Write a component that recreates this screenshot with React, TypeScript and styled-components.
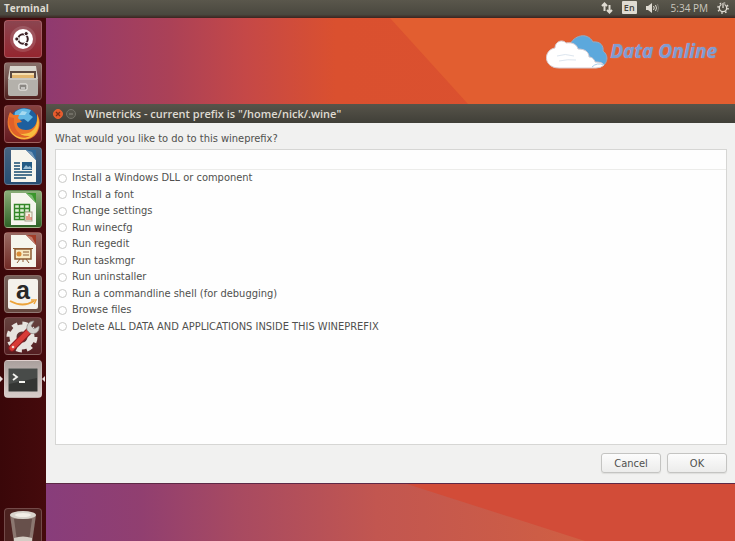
import React, { useState } from "react";
import styled, { createGlobalStyle } from "styled-components";

const GlobalStyle = createGlobalStyle`
  * { box-sizing: border-box; }
  body { margin: 0; font-family: "DejaVu Sans Condensed", "DejaVu Sans", sans-serif; font-size: 11px; color: #50504e; }
  button, input { font: inherit; color: inherit; }
`;

const Desktop = styled.div`
  display: flex;
  flex-direction: column;
  height: 100vh;
  overflow: hidden;
`;

const TopBar = styled.header`
  display: flex;
  align-items: center;
  justify-content: space-between;
  flex: none;
  height: 18px;
  padding: 0 6px 3px 4px;
  background: linear-gradient(#5a574c, #4a483f 80%, #3b2420);
  color: #dfdbd2;
  font-family: "Open Sans", sans-serif;
`;

const AppName = styled.span`
  font-size: 10px;
  font-weight: 700;
`;

const Indicators = styled.div`
  display: flex;
  align-items: center;
  gap: 9px;
`;

const Language = styled.span`
  padding: 0 2px;
  border-radius: 1px;
  background: #dfdbd2;
  color: #45433c;
  font-size: 9px;
  line-height: 13px;
  font-weight: 600;
`;

const Clock = styled.time`
  margin-left: 3px;
  color: #cbc7be;
  font-size: 10px;
`;

const Main = styled.div`
  display: flex;
  flex: 1;
  min-height: 0;
`;

const Launcher = styled.nav`
  display: flex;
  flex-direction: column;
  justify-content: space-between;
  flex: none;
  width: 46px;
  padding: 2px 0 0 4px;
  background: linear-gradient(90deg, #3a0709, #450a0c);
  overflow: hidden;
`;

const AppList = styled.div`
  display: grid;
  grid-auto-rows: 42px 43px;
`;

const Tile = styled.button<{ $bg: string; $active?: boolean }>`
  position: relative;
  flex: none;
  width: 38px;
  height: 38px;
  padding: 0;
  border: 1px solid rgba(255, 220, 220, 0.22);
  border-radius: 4px;
  background: ${(p) => p.$bg};
  svg { display: block; width: 36px; height: 36px; }
  &::before, &::after {
    content: "";
    display: ${(p) => (p.$active ? "block" : "none")};
    position: absolute;
    top: 15px;
    border: 3px solid transparent;
  }
  &::before { left: -5px; border-left-color: #e9dede; border-right-width: 0; }
  &::after { right: -4px; border-right-color: #e9dede; border-left-width: 0; }
`;

const TrashTile = styled(Tile)`
  margin-bottom: -5px;
`;

const Workspace = styled.main`
  display: flex;
  flex: 1;
  flex-direction: column;
  min-width: 0;
`;

const Banner = styled.div`
  display: flex;
  justify-content: flex-end;
  align-items: flex-start;
  flex: none;
  height: 86px;
  padding: 15px 18px 0 0;
  background: linear-gradient(90deg, #8f3a70, #ab4157 18%, #c54847 29%, #da502f 42%, #dc522f);
  position: relative;
`;

const Beam = styled.svg`
  position: absolute;
  inset: 0;
  width: 100%;
  height: 100%;
`;

const Brand = styled.div`
  display: flex;
  align-items: center;
  gap: 2px;
  position: relative;
  color: #7f9bd2;
  font: italic 700 19px "Open Sans", sans-serif;
  line-height: 37px;
  text-shadow: 0 0 1px #c9b8c4;
`;

const Dialog = styled.section`
  display: flex;
  flex-direction: column;
  flex: 1;
  min-height: 0;
  background: #f1f1f0;
`;

const TitleBar = styled.header`
  display: flex;
  align-items: center;
  gap: 3px;
  flex: none;
  height: 19px;
  padding-left: 7px;
  background: linear-gradient(#57544a, #403f38);
  color: #dfdbd2;
`;

const WindowButton = styled.button<{ $close?: boolean }>`
  width: 10px;
  height: 10px;
  padding: 0;
  border: 1px solid ${(p) => (p.$close ? "#e96032" : "#75736a")};
  border-radius: 50%;
  background: ${(p) => (p.$close ? "#e65a2c" : "#55534a")};
  svg { display: block; width: 8px; height: 8px; }
`;

const Title = styled.h1`
  margin: 0 0 0 6px;
  font-family: "Open Sans", sans-serif;
  font-size: 11px;
  font-weight: 600;
`;

const Content = styled.form`
  display: flex;
  flex: 1;
  flex-direction: column;
  min-height: 0;
  padding: 8px 8px 10px 9px;
`;

const Prompt = styled.p`
  margin: 0 0 3px;
  line-height: 15px;
`;

const List = styled.fieldset`
  flex: 1;
  min-width: 0;
  min-height: 0;
  margin: 0;
  padding: 0;
  border: 1px solid #d6d6d4;
  background: #fefefe;
`;

const ListHeader = styled.div`
  height: 20px;
  border-bottom: 1px solid #ececea;
`;

const Options = styled.div`
  display: grid;
  grid-template-rows: repeat(5, 16px 17px);
`;

const Option = styled.label`
  display: flex;
  align-items: center;
  gap: 5px;
  padding-left: 2px;
  line-height: 16px;
  white-space: nowrap;
`;

const Radio = styled.input`
  appearance: none;
  width: 9px;
  height: 9px;
  margin: 0;
  border: 1px solid #c9c9c7;
  border-radius: 50%;
  background: #fff;
  &:checked { background: radial-gradient(#555 35%, #fff 40%); }
`;

const Actions = styled.footer`
  display: flex;
  justify-content: flex-end;
  gap: 6px;
  padding-top: 8px;
`;

const Action = styled.button`
  width: 60px;
  height: 20px;
  padding: 0;
  border: 1px solid #c4c4c2;
  border-radius: 3px;
  background: linear-gradient(#fcfcfc, #ececeb);
  box-shadow: 0 1px 1px #dededc;
`;

const LowerDesktop = styled.div`
  position: relative;
  flex: none;
  height: 58px;
  border-top: 1px solid #5d2946;
  background: linear-gradient(90deg, #883d7b, #913f70 14%, #a84a61 28%, #c25650 48%, #d05f43 78%);
`;

const UbuntuIcon = () => (
  <svg viewBox="0 0 36 36">
    <circle cx="18" cy="18" r="13" fill="#ffffff22" />
    <circle cx="18" cy="18" r="10" fill="#fff" />
    <circle cx="18" cy="18" r="4.8" fill="none" stroke="#3d2226" strokeWidth="2" />
    <g fill="#3d2226" stroke="#fff" strokeWidth="1">
      <circle cx="11.8" cy="18" r="2.1" />
      <circle cx="21.2" cy="12.6" r="2.1" />
      <circle cx="21.2" cy="23.4" r="2.1" />
    </g>
  </svg>
);

const FilesIcon = () => (
  <svg viewBox="0 0 36 36">
    <path d="M5 3h26l2 13H3z" fill="#d9d5cd" />
    <path d="M5 8h26v8H5z" fill="#5b4941" />
    <path d="M7 10h22v6H7z" fill="#e2b56f" />
    <path d="M7 10h22v2H7z" fill="#f5deb0" />
    <rect x="3" y="15" width="30" height="18" rx="2" fill="#b4b1ab" />
    <path d="M4 16h28" stroke="#dedbd5" />
    <rect x="14" y="21" width="8" height="6" rx="1" fill="#8a8782" stroke="#f4f2ee" />
    <path d="M16 25h4" stroke="#fff" />
  </svg>
);

const FirefoxIcon = () => (
  <svg viewBox="0 0 36 36">
    <circle cx="19" cy="16" r="14" fill="#1d5f9f" />
    <path d="M10 6q7-6 16-2l-2 4 4 3-5 5-4-3-6 1-4-2z" fill="#64b8e4" />
    <path d="M17 5l5 1-2 3-6 0z" fill="#a6daf0" />
    <path d="M5 6c-4 9-3 18 3 23 7 7 19 6 24-2 4-7 3-15 0-19 1 10-3 16-11 16-6 0-9-3-9-7l5-1-4-4 1-3-5 0c-2-1-3-2-4-3z" fill="#ed762a" />
    <path d="M32 8c2 10-3 20-14 20C9 28 5 23 4 16c0 10 5 17 15 17 12 0 18-13 13-25z" fill="#f7bd3e" />
    <path d="M4 11c-1 8 1 14 6 18 5 3 10 4 15 1C14 31 8 23 9 12z" fill="#e0602a" />
  </svg>
);

const DocumentIcon = ({ color, children }: { color: string; children: React.ReactNode }) => (
  <svg viewBox="0 0 36 36">
    <path d="M6 2h15l10 10v22H6z" fill="#f6f5ed" />
    <path d="M21 2h10v10z" fill={color} />
    <path d="M21 2l10 10-4-8z" fill="#ffffff55" />
    {children}
  </svg>
);

const WriterIcon = () => (
  <DocumentIcon color="#2f6697">
    <path d="M9 15h6M9 18h6M9 21h6M9 24h18M9 27h18M9 30h12" stroke="#164b70" strokeWidth="1.6" />
    <rect x="17" y="14" width="10" height="8" fill="#245c85" />
    <path d="M18 21l3-4 2 2 2-1 2 3z" fill="#9bbfd5" />
  </DocumentIcon>
);

const CalcIcon = () => (
  <DocumentIcon color="#3a962b">
    <path d="M9.500 13.500h15v15h-15zM9.500 17.500h15M9.500 21.500h15M9.500 25.500h15M14.500 13v15M19.500 13v15" fill="#dff0d5" stroke="#348728" strokeWidth="1.4" />
    <rect x="20" y="21" width="7" height="9" fill="#f5f1df" stroke="#a5a18b" />
    <path d="M22 29v-4M24 29v-6M26 29v-3" stroke="#d14b34" />
  </DocumentIcon>
);

const ImpressIcon = () => (
  <DocumentIcon color="#a23c27">
    <rect x="10" y="16" width="16" height="10" fill="#f7e9c3" stroke="#8d5b33" strokeWidth="1.5" />
    <path d="M8 15.500h20M18 26v3M12 30l3-4M24 30l-3-4M18 19h6M18 22h6" stroke="#8d5b33" />
    <circle cx="14" cy="21" r="2.500" fill="#d98c37" />
  </DocumentIcon>
);

const AmazonIcon = () => (
  <svg viewBox="0 0 36 36">
    <rect x="3" y="3" width="30" height="30" rx="2" fill="#f5f2ec" />
    <text x="18" y="23" textAnchor="middle" fontFamily="Liberation Sans, sans-serif" fontWeight="700" fontSize="25" fill="#292827">a</text>
    <path d="M5 25q13 7 24 0" fill="none" stroke="#eda43b" strokeWidth="1.800" />
    <path d="M26 24h5l-2 4" fill="none" stroke="#eda43b" strokeWidth="1.500" />
  </svg>
);

const SettingsIcon = () => (
  <svg viewBox="0 0 36 36">
    <circle cx="17" cy="19" r="9" fill="none" stroke="#e7e4df" strokeWidth="7" />
    <circle cx="17" cy="19" r="13.500" fill="none" stroke="#e7e4df" strokeWidth="4" strokeDasharray="5.600 5" />
    <path d="M7 30L25 12" stroke="#8d1b20" strokeWidth="7" strokeLinecap="round" />
    <path d="M7 30L24 13" stroke="#d83b36" strokeWidth="5" strokeLinecap="round" />
    <path d="M22 12c-1-6 3-9 7-9l-3 5 3 3 5-3c1 6-4 9-9 7z" fill="#d4d2ce" stroke="#8d8885" strokeWidth=".7" />
    <circle cx="8" cy="29" r="1.300" fill="#efd5ca" />
  </svg>
);

const TerminalIcon = () => (
  <svg viewBox="0 0 36 36">
    <rect x="3.500" y="7.500" width="29" height="23" rx="1" fill="#343634" stroke="#81807d" />
    <path d="M4 8h28v9L4 23z" fill="#484b49" />
    <path d="M8 13l4 3-4 3M14 21h6" fill="none" stroke="#f3f3ef" strokeWidth="1.800" />
  </svg>
);

const TrashIcon = () => (
  <svg viewBox="0 0 36 36">
    <path d="M5 6h26l-4 28H9z" fill="#8b7770" />
    <path d="M9 10h18l-3 22H12z" fill="#67504b" />
    <ellipse cx="18" cy="6" rx="13" ry="4" fill="#d9d4cd" />
    <ellipse cx="18" cy="6" rx="8" ry="2" fill="#f2eee7" />
    <path d="M9 29q9-3 18 0v7H9z" fill="#d4cdc5" />
  </svg>
);

const CloudLogo = () => (
  <svg width="62" height="37" viewBox="0 0 62 37">
    <path d="M24 12C27 3 41-2 47 9c7-1 11 4 10 9 7 5 4 15-4 16H28C16 35 12 22 24 12z" fill="#5ca8dc" stroke="#9aa9bd" />
    <path d="M13 35C-3 35-3 17 9 15c0-7 8-9 11-5 7-1 11 2 12 6 7 0 11 3 11 8 4 0 6 4 6 5 5 0 8 1 9 3q-3 3-8 3z" fill="#fff" stroke="#d7cbd0" />
    <path d="M11 23q8-3 17 0M13 28q9-2 17-1" fill="none" stroke="#dde6ef" />
    <path d="M46 34q5-5 12-2" fill="none" stroke="#a8cdea" />
  </svg>
);

const NetworkIcon = () => (
  <svg width="12" height="12" viewBox="0 0 12 12" fill="none" stroke="#dfdbd2" strokeWidth="2">
    <path d="M3.500 9V2M1 4l2.500-2.500L6 4M8.500 3v7M6 8l2.500 2.500L11 8" />
  </svg>
);

const SoundIcon = () => (
  <svg width="13" height="12" viewBox="0 0 13 12" fill="none" stroke="#dfdbd2">
    <path d="M0 4h2l4-3v10L2 8H0z" fill="#dfdbd2" stroke="none" />
    <path d="M7.500 4q1.500 2 0 4M9.500 3q2 3 0 6" />
    <path d="M11.500 2q2 4 0 8" stroke="#858177" />
  </svg>
);

const PowerIcon = () => (
  <svg width="12" height="12" viewBox="0 0 12 12" fill="none" stroke="#dfdbd2">
    <circle cx="6" cy="6" r="3.700" strokeWidth="1.300" />
    <circle cx="6" cy="6" r="5" strokeWidth="1.600" strokeDasharray="1.600 2.327" />
    <path d="M6 1v5" stroke="#4e4b42" strokeWidth="3" />
    <path d="M6 1v5" strokeWidth="1.300" />
  </svg>
);

const apps = [
  { name: "Search", bg: "linear-gradient(#8b4550, #95262f)", Icon: UbuntuIcon },
  { name: "Files", bg: "linear-gradient(#88706a, #51211f)", Icon: FilesIcon },
  { name: "Firefox", bg: "linear-gradient(#87433f, #641820)", Icon: FirefoxIcon },
  { name: "Writer", bg: "linear-gradient(#466380, #264e73)", Icon: WriterIcon },
  { name: "Calc", bg: "linear-gradient(#8bae78, #2f6427)", Icon: CalcIcon },
  { name: "Impress", bg: "linear-gradient(#9a6a63, #712a25)", Icon: ImpressIcon },
  { name: "Amazon", bg: "linear-gradient(#74605a, #66483f)", Icon: AmazonIcon },
  { name: "System settings", bg: "linear-gradient(#66433f, #541d20)", Icon: SettingsIcon },
  { name: "Terminal", bg: "linear-gradient(#aaa09d, #d7cdca)", Icon: TerminalIcon },
];

const options = [
  "Install a Windows DLL or component",
  "Install a font",
  "Change settings",
  "Run winecfg",
  "Run regedit",
  "Run taskmgr",
  "Run uninstaller",
  "Run a commandline shell (for debugging)",
  "Browse files",
  "Delete ALL DATA AND APPLICATIONS INSIDE THIS WINEPREFIX",
];

export default function App() {
  const [choice, setChoice] = useState("");
  return (
    <Desktop>
      <GlobalStyle />
      <TopBar>
        <AppName>Terminal</AppName>
        <Indicators>
          <NetworkIcon />
          <Language>En</Language>
          <SoundIcon />
          <Clock>5:34 PM</Clock>
          <PowerIcon />
        </Indicators>
      </TopBar>
      <Main>
        <Launcher aria-label="Launcher">
          <AppList>
            {apps.map(({ name, bg, Icon }) => (
              <Tile key={name} aria-label={name} $bg={bg} $active={name === "Terminal"}>
                <Icon />
              </Tile>
            ))}
          </AppList>
          <TrashTile aria-label="Trash" $bg="#4c2220">
            <TrashIcon />
          </TrashTile>
        </Launcher>
        <Workspace>
          <Banner>
            <Beam viewBox="0 0 689 86" preserveAspectRatio="none" aria-hidden="true">
              <path d="M344 0H689V86H422z" fill="#e25e30" />
            </Beam>
            <Brand>
              <CloudLogo />
              Data Online
            </Brand>
          </Banner>
          <Dialog aria-labelledby="dialog-title">
            <TitleBar>
              <WindowButton $close aria-label="Close">
                <svg viewBox="0 0 8 8"><path d="M2 2l4 4M6 2L2 6" stroke="#7c3018" strokeWidth="1.300" /></svg>
              </WindowButton>
              <WindowButton aria-label="Minimize">
                <svg viewBox="0 0 8 8"><path d="M2 4h4" stroke="#8d8a80" /></svg>
              </WindowButton>
              <Title id="dialog-title">Winetricks - current prefix is "/home/nick/.wine"</Title>
            </TitleBar>
            <Content onSubmit={(e) => e.preventDefault()}>
              <Prompt id="prompt">What would you like to do to this wineprefix?</Prompt>
              <List aria-labelledby="prompt">
                <ListHeader />
                <Options>
                  {options.map((label) => (
                    <Option key={label}>
                      <Radio type="radio" name="action" checked={choice === label} onChange={() => setChoice(label)} />
                      {label}
                    </Option>
                  ))}
                </Options>
              </List>
              <Actions>
                <Action type="button" onClick={() => setChoice("")}>Cancel</Action>
                <Action type="submit">OK</Action>
              </Actions>
            </Content>
          </Dialog>
          <LowerDesktop>
            <Beam viewBox="0 0 689 58" preserveAspectRatio="none" aria-hidden="true">
              <path d="M361 0H689V58H539z" fill="#d24c38" />
            </Beam>
          </LowerDesktop>
        </Workspace>
      </Main>
    </Desktop>
  );
}
